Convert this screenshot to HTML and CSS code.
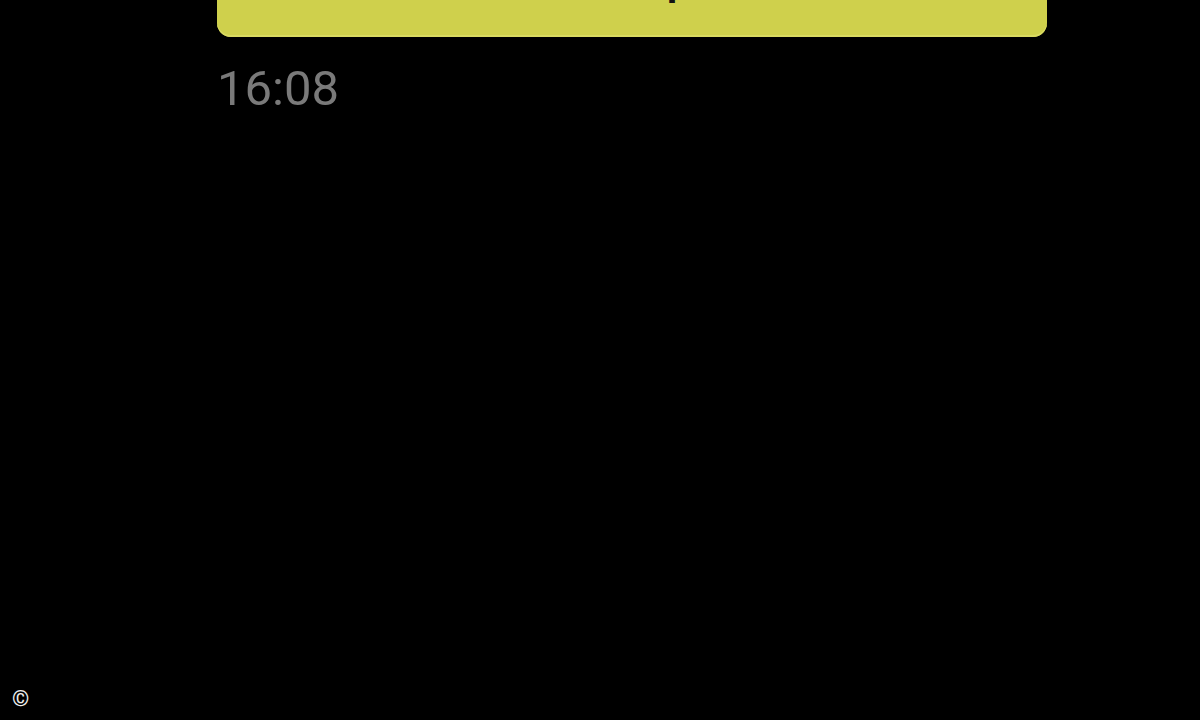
FILE: index.html
```html
<!DOCTYPE html>
<html lang="en">
<head>
    <meta charset="UTF-8">
    <title>Message</title>
    <link rel="stylesheet" href="styles.css">
</head>
<body>
    <div class="screen">
        <div class="thread">
            <div class="bubble"><span class="bubble-text">p</span></div>
            <div class="time">16:08</div>
        </div>
        <div class="credit">&copy;</div>
    </div>
</body>
</html>
```
FILE: styles.css
```css
html, body {
    margin: 0;
    padding: 0;
    background: #000;
}

.screen {
    width: 1200px;
    height: 720px;
    overflow: hidden;
    display: flex;
    flex-direction: column;
    justify-content: space-between;
    font-family: Roboto, "Noto Sans", sans-serif;
}

.thread {
    padding-left: 217px;
    width: 830px;
}

/* Message bubble, top is cut off by the screen edge */
.bubble {
    margin-top: -43px;
    height: 80px;
    background-color: #cfd04c;
    border-radius: 14px;
    box-shadow: inset 0 -2px 0 #d9da62;
    overflow: hidden;
    padding-left: 450px;
    box-sizing: border-box;
}

.bubble-text {
    display: block;
    font-size: 40px;
    font-weight: bold;
    line-height: 40px;
    padding-top: 5px;
    color: #111;
}

.time {
    margin-top: 22px;
    font-size: 49px;
    line-height: 60px;
    color: #7a7a7a;
}

.credit {
    padding: 0 0 9px 12px;
    font-size: 22px;
    color: #eee;
}
```
